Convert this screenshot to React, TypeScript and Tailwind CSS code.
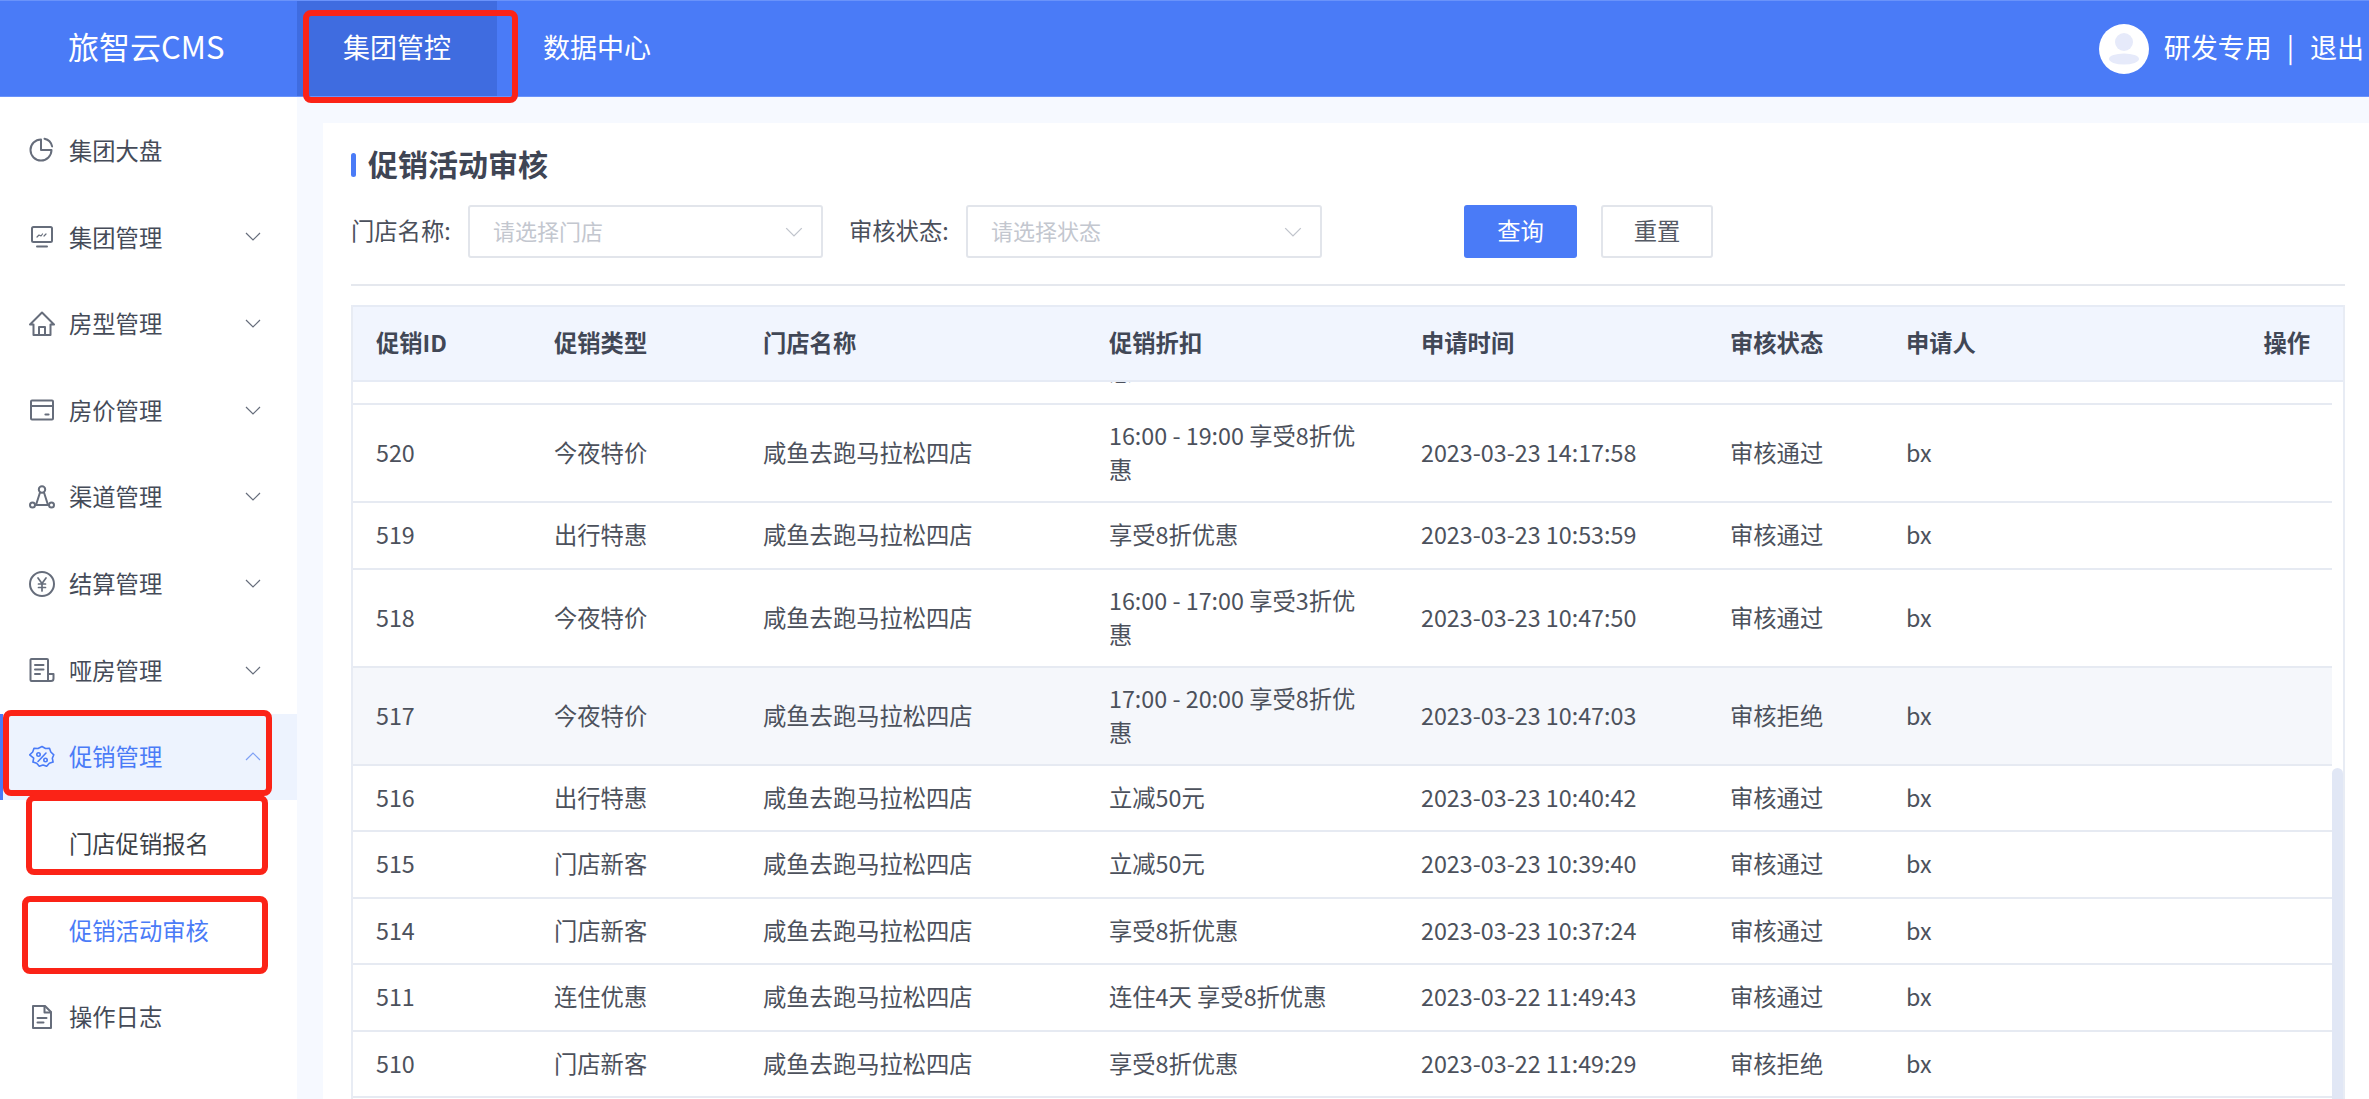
import type { ReactNode } from 'react';

const Icon = ({ children }: { children: ReactNode }) => (
  <svg viewBox="0 0 26 26" fill="none" stroke="currentColor" strokeWidth="2" strokeLinecap="round" strokeLinejoin="round" className="h-[26px] w-[26px] shrink-0">
    {children}
  </svg>
);

const Chevron = ({ up, className }: { up?: boolean; className: string }) => (
  <svg viewBox="0 0 16 9" fill="none" stroke="currentColor" strokeWidth="1.2" className={className}>
    <path d={up ? 'M1 8l7-7 7 7' : 'M1 1l7 7 7-7'} />
  </svg>
);

const MENU = [
  {
    label: '集团大盘',
    icon: (
      <>
        <path d="M12 2.500A10.500 10.500 0 1 0 22.500 13H12z" />
        <path d="M15.500 1.800a10 10 0 0 1 7.600 7.600" />
      </>
    ),
  },
  {
    label: '集团管理',
    arrow: true,
    icon: (
      <>
        <rect x="3" y="3" width="20" height="15" rx="1.500" />
        <path d="M8 13l2-2 2 1 1.500-2M15 12l2-2" strokeWidth="1.200" />
        <path d="M8 22.500h10" />
      </>
    ),
  },
  {
    label: '房型管理',
    arrow: true,
    icon: (
      <>
        <path d="M1 13.500L13 1.500l12 12h-3.500V24h-17V13.500z" />
        <path d="M10 24v-8h6v8" />
      </>
    ),
  },
  {
    label: '房价管理',
    arrow: true,
    icon: (
      <>
        <rect x="2" y="3.500" width="22" height="19" rx="1" />
        <path d="M2 9h22" />
        <path d="M16.500 17.500h3" strokeWidth="2.200" />
      </>
    ),
  },
  {
    label: '渠道管理',
    arrow: true,
    icon: (
      <>
        <circle cx="13" cy="5.500" r="3.200" />
        <circle cx="3.500" cy="21" r="2.500" />
        <circle cx="22.500" cy="21" r="2.500" />
        <path d="M11 8.500L7 21M15 8.500l4 12.500M6 21h14" />
      </>
    ),
  },
  {
    label: '结算管理',
    arrow: true,
    icon: (
      <>
        <circle cx="13" cy="13" r="12" />
        <path d="M9 7l4 5.500 4-5.500M13 12.500V20M9.500 13h7M9.500 16.500h7" strokeWidth="1.700" />
      </>
    ),
  },
  {
    label: '哑房管理',
    arrow: true,
    icon: (
      <>
        <path d="M19 24H2.500a1 1 0 0 1-1-1V3a1 1 0 0 1 1-1H18a1 1 0 0 1 1 1v20" />
        <path d="M19 17h5.500v4.500A2.500 2.500 0 0 1 22 24h-3" />
        <path d="M6 8h8.500M6 12.500h8.500M6 17h5" />
      </>
    ),
  },
  {
    label: '促销管理',
    arrow: true,
    active: true,
    icon: (
      <>
        <path d="M13 2.500l3.500 2 4-.3 1.300 3.800 3 2.800-1.500 3.400.8 3.900-3.800 1.200-2.600 3-3.700-1.300-3.700 1.300-2.600-3-3.800-1.200.8-3.900L.7 10.800l3-2.800L5 4.200l4 .3z" strokeWidth="1.600" />
        <path d="M9 17.500l8-8.500" strokeWidth="1.600" />
        <circle cx="9.500" cy="10.500" r="1.700" strokeWidth="1.600" />
        <circle cx="16.500" cy="16" r="1.700" strokeWidth="1.600" />
      </>
    ),
  },
];

const ROWS = [
  { id: '520', type: '今夜特价', discount: '16:00 - 19:00 享受8折优惠', time: '2023-03-23 14:17:58', status: '审核通过' },
  { id: '519', type: '出行特惠', discount: '享受8折优惠', time: '2023-03-23 10:53:59', status: '审核通过' },
  { id: '518', type: '今夜特价', discount: '16:00 - 17:00 享受3折优惠', time: '2023-03-23 10:47:50', status: '审核通过' },
  { id: '517', type: '今夜特价', discount: '17:00 - 20:00 享受8折优惠', time: '2023-03-23 10:47:03', status: '审核拒绝', hover: true },
  { id: '516', type: '出行特惠', discount: '立减50元', time: '2023-03-23 10:40:42', status: '审核通过' },
  { id: '515', type: '门店新客', discount: '立减50元', time: '2023-03-23 10:39:40', status: '审核通过' },
  { id: '514', type: '门店新客', discount: '享受8折优惠', time: '2023-03-23 10:37:24', status: '审核通过' },
  { id: '511', type: '连住优惠', discount: '连住4天 享受8折优惠', time: '2023-03-22 11:49:43', status: '审核通过' },
  { id: '510', type: '门店新客', discount: '享受8折优惠', time: '2023-03-22 11:49:29', status: '审核拒绝' },
];

const GRID = 'grid grid-cols-[178px_209px_346px_312px_309px_176px_1fr_auto] items-center pl-[23px]';

const MenuItem = ({ item }: { item: (typeof MENU)[number] }) => (
  <div className={`flex h-[86.67px] items-center ${item.active ? 'border-l-[3px] border-[#4a7bf7] bg-[#edf3fe] pl-[26px] text-[#4a7bf7]' : 'pl-[29px] text-[#454b58]'}`}>
    <span className={item.active ? 'text-[#4a7bf7]' : 'text-[#666d7b]'}>
      <Icon>{item.icon}</Icon>
    </span>
    <span className="ml-[14px] text-[23.300px]">{item.label}</span>
    {item.arrow && (
      <Chevron up={item.active} className={`ml-auto mr-[36px] h-[9px] w-[16px] ${item.active ? 'text-[#7ea0f5]' : 'text-[#666d7b]'}`} />
    )}
  </div>
);

const SelectBox = ({ placeholder, width }: { placeholder: string; width: string }) => (
  <div className={`flex h-[53px] items-center justify-between rounded-[3px] border-2 border-[#e2e5eb] pl-[23px] pr-[18px] ${width}`}>
    <span className="pb-[2px] text-[22px] text-[#c3c7cf]">{placeholder}</span>
    <Chevron className="h-[10px] w-[18px] text-[#c0c4cc]" />
  </div>
);

export default function App() {
  return (
    <div className="relative h-[1099px] w-[2369px] overflow-hidden bg-white font-['Noto_Sans_CJK_SC','Noto_Sans',sans-serif]">
      {/* Top bar */}
      <header className="flex h-[97px] items-center border-y border-[#6a93fa] bg-[#4a7bf7] text-white">
        <div className="w-[297px] pb-[5px] pl-[68px] text-[31px]">旅智云CMS</div>
        <div className="flex h-full w-[200px] items-center bg-[#3f6ce0] pb-[2px] pl-[46px] text-[27px]">集团管控</div>
        <div className="ml-[46px] pb-[2px] text-[27px]">数据中心</div>
        <div className="ml-auto flex items-center pr-[5px] text-[27px]">
          <svg viewBox="0 0 50 50" className="h-[50px] w-[50px]">
            <circle cx="25" cy="25" r="25" fill="#fff" />
            <circle cx="25" cy="18" r="9" fill="#e6eafa" />
            <ellipse cx="25" cy="35" rx="15" ry="5.500" fill="#e6eafa" />
          </svg>
          <span className="ml-[15px] pb-[2px]">研发专用</span>
          <span className="ml-[15px] pb-[2px]">|</span>
          <span className="ml-[16px] pb-[2px]">退出</span>
        </div>
      </header>

      <div className="flex h-[1002px]">
        {/* Sidebar */}
        <aside className="w-[297px] shrink-0 pt-[10px]">
          {MENU.map((item) => (
            <MenuItem key={item.label} item={item} />
          ))}
          <div className="flex h-[86.67px] items-center pl-[69px] text-[23.300px] text-[#3c3f46]">门店促销报名</div>
          <div className="flex h-[86.67px] items-center pl-[69px] text-[23.300px] text-[#4a7bf7]">促销活动审核</div>
          <MenuItem
            item={{
              label: '操作日志',
              icon: (
                <>
                  <path d="M4 2h12l6 6v16H4z" />
                  <path d="M15.500 2v6.500H22M8.500 14h9M8.500 18.500h6" />
                </>
              ),
            }}
          />
        </aside>

        {/* Content */}
        <main className="flex-1 bg-[#f6f9ff] pl-[26px] pt-[26px]">
          <section className="h-full bg-white pl-[28px] pr-[24px] pt-[26px]">
            <div className="flex h-[32px] items-center">
              <span className="h-[24px] w-[5px] rounded-sm bg-[#4a7bf7]" />
              <h1 className="ml-[12px] pb-[3px] text-[30px] font-bold text-[#3f4554]">促销活动审核</h1>
            </div>

            <div className="mt-[24px] flex items-center text-[23.300px] text-[#4b505c]">
              <span className="w-[117px] pb-[2px]">门店名称:</span>
              <SelectBox placeholder="请选择门店" width="w-[355px]" />
              <span className="ml-[26px] w-[117px] pb-[2px]">审核状态:</span>
              <SelectBox placeholder="请选择状态" width="w-[356px]" />
              <button className="ml-[142px] h-[53px] w-[113px] rounded-[3px] bg-[#4a7bf7] pb-[2px] text-white">查询</button>
              <button className="ml-[24px] h-[53px] w-[112px] rounded-[3px] border-2 border-[#e2e5eb] pb-[2px] text-[#555a65]">重置</button>
            </div>

            <div className="mt-[26px] h-[2px] bg-[#e5e8ee]" />

            {/* Table */}
            <div className="mt-[19px] flex h-[794px] flex-col border-x-2 border-[#e8ecf4] text-[23.300px] text-[#4c515c]">
              <div className={`${GRID} h-[77px] shrink-0 border-y-2 border-[#e6ebf5] bg-[#f1f5fe] pb-[2px] pr-[33px] font-bold text-[#414756]`}>
                <span>促销ID</span>
                <span>促销类型</span>
                <span>门店名称</span>
                <span>促销折扣</span>
                <span>申请时间</span>
                <span>审核状态</span>
                <span>申请人</span>
                <span>操作</span>
              </div>
              <div className="flex min-h-0 flex-1 overflow-hidden">
                <div className="flex-1">
                  {/* row scrolled almost out of view, only the foot of its last line still shows */}
                  <div className={`${GRID} -mt-[75px] h-[98px] border-b-2 border-[#e6eaf2] pb-[15px] pt-[13px] leading-[34px]`}>
                    <span />
                    <span />
                    <span />
                    <span className="pr-[50px]">16:00 - 20:00 享受8折优惠</span>
                  </div>
                  {ROWS.map((row) => (
                    <div
                      key={row.id}
                      className={`${GRID} min-h-[66.5px] border-b-2 border-[#e6eaf2] pb-[15px] pt-[13px] leading-[34px] ${row.hover ? 'bg-[#f5f7fb]' : ''}`}
                    >
                      <span>{row.id}</span>
                      <span>{row.type}</span>
                      <span>咸鱼去跑马拉松四店</span>
                      <span className="pr-[50px]">{row.discount}</span>
                      <span>{row.time}</span>
                      <span>{row.status}</span>
                      <span>bx</span>
                      <span />
                    </div>
                  ))}
                </div>
                <div className="w-[11px] shrink-0 pt-[386px]">
                  <div className="h-full rounded-t-full bg-[#e1e7f5]" />
                </div>
              </div>
            </div>
          </section>
        </main>
      </div>

      {/* Red annotation boxes */}
      <div className="absolute left-[303px] top-[10px] h-[93px] w-[215px] rounded-[8px] border-[6px] border-[#fb2317]" />
      <div className="absolute left-[3px] top-[710px] h-[86px] w-[269px] rounded-[8px] border-[6px] border-[#fb2317]" />
      <div className="absolute left-[26px] top-[795px] h-[80px] w-[242px] rounded-[8px] border-[6px] border-[#fb2317]" />
      <div className="absolute left-[22px] top-[896px] h-[78px] w-[246px] rounded-[8px] border-[6px] border-[#fb2317]" />
    </div>
  );
}
